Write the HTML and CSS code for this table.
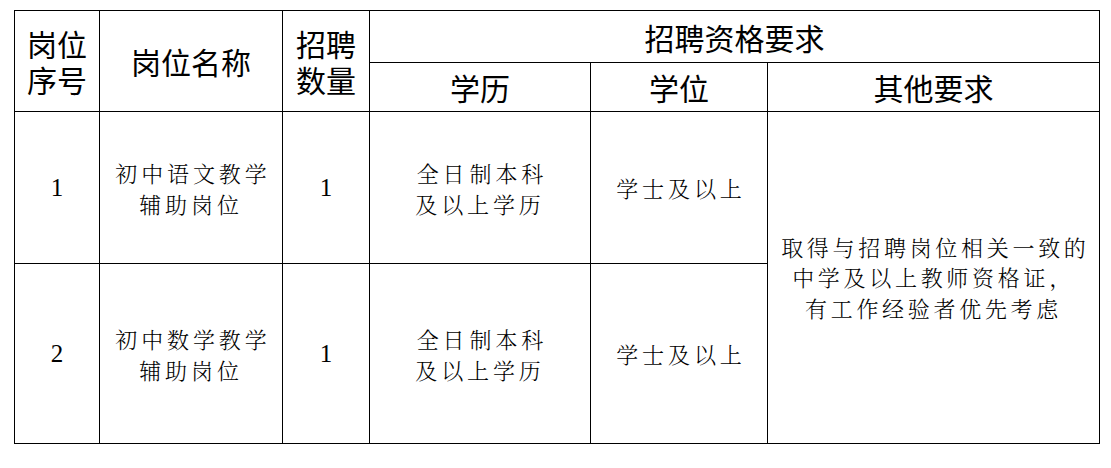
FILE: index.html
```html
<!DOCTYPE html>
<html lang="zh-CN">
<head>
<meta charset="utf-8">
<title>招聘岗位表</title>
<link rel="stylesheet" href="styles.css">
</head>
<body>
<div class="page">
  <table class="jobs">
    <colgroup>
      <col class="c-no">
      <col class="c-name">
      <col class="c-count">
      <col class="c-edu">
      <col class="c-deg">
      <col class="c-other">
    </colgroup>
    <thead>
      <tr class="h1">
        <th rowspan="2" class="head two"><span class="ln">岗位</span><span class="ln">序号</span></th>
        <th rowspan="2" class="head">岗位名称</th>
        <th rowspan="2" class="head two"><span class="ln">招聘</span><span class="ln">数量</span></th>
        <th colspan="3" class="head">招聘资格要求</th>
      </tr>
      <tr class="h2">
        <th class="head">学历</th>
        <th class="head">学位</th>
        <th class="head">其他要求</th>
      </tr>
    </thead>
    <tbody>
      <tr class="r1">
        <td class="num">1</td>
        <td class="txt">初中语文教学<br>辅助岗位</td>
        <td class="num">1</td>
        <td class="txt">全日<span class="gap"></span>制本科<br>及以上学历</td>
        <td class="txt">学士及以上</td>
        <td rowspan="2" class="txt other">取得与招聘岗位相关一致的<br>中学及以上教师资格证，<br>有工作经验者优先考虑</td>
      </tr>
      <tr class="r2">
        <td class="num">2</td>
        <td class="txt">初中数学教学<br>辅助岗位</td>
        <td class="num">1</td>
        <td class="txt">全日<span class="gap"></span>制本科<br>及以上学历</td>
        <td class="txt">学士及以上</td>
      </tr>
    </tbody>
  </table>
</div>
</body>
</html>
```

FILE: styles.css
```css
html, body {
  margin: 0;
  padding: 0;
  background: #ffffff;
}

.page {
  padding: 10px 0 0 14px;
}

.jobs {
  border-collapse: collapse;
  table-layout: fixed;
  width: 1085px;
  color: #000;
}

.c-no { width: 85px; }
.c-name { width: 183px; }
.c-count { width: 87px; }
.c-edu { width: 221px; }
.c-deg { width: 177px; }
.c-other { width: 332px; }

.jobs th,
.jobs td {
  border: 1px solid #000;
  padding: 0;
  text-align: center;
  vertical-align: middle;
}

.h1 { height: 52px; }
.h2 { height: 49px; }
.r1 { height: 152px; }
.r2 { height: 180px; }

.head {
  font-family: "Noto Sans CJK SC", "Noto Sans", sans-serif;
  font-size: 30px;
  font-weight: 400;
  line-height: 36px;
}

.two {
  line-height: 30px;
}

.two .ln {
  display: block;
  height: 36px;
  line-height: 36px;
}

.num {
  font-family: "Liberation Serif", "Times New Roman", serif;
  font-size: 25px;
  line-height: 30px;
}

.txt {
  font-family: "Noto Serif CJK SC", "Noto Sans CJK SC", serif;
  font-weight: 300;
  font-size: 22px;
  line-height: 31px;
  letter-spacing: 3.9px;
  text-indent: 3.9px;
}

.gap {
  display: inline-block;
  width: 1px;
}

.other {
  line-height: 30.5px;
  letter-spacing: 3.7px;
  text-indent: 3.7px;
}
```
